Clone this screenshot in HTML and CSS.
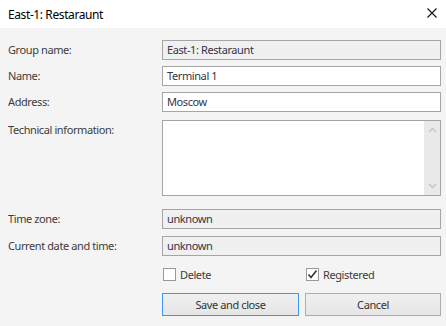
FILE: index.html
```html
<!DOCTYPE html>
<html lang="en">
<head>
    <meta charset="UTF-8">
    <title>East-1: Restaraunt</title>
    <link rel="stylesheet" href="styles.css">
</head>
<body>
    <div class="titlebar">
        <span class="title">East-1: Restaraunt</span>
        <span class="close">
            <svg width="10" height="10" viewBox="0 0 10 10">
                <path d="M0.5 0.5 L9.5 9.5 M9.5 0.5 L0.5 9.5" stroke="#111" stroke-width="1.1" fill="none"/>
            </svg>
        </span>
    </div>

    <div class="form">
        <div class="row">
            <label class="label">Group name:</label>
            <div class="field readonly">East-1: Restaraunt</div>
        </div>
        <div class="row">
            <label class="label">Name:</label>
            <div class="field">Terminal 1</div>
        </div>
        <div class="row">
            <label class="label">Address:</label>
            <div class="field">Moscow</div>
        </div>
        <div class="row row-memo">
            <label class="label">Technical information:</label>
            <div class="memo">
                <div class="memo-text"></div>
                <div class="scrollbar">
                    <svg width="9" height="6" viewBox="0 0 9 6">
                        <path d="M1 5 L4.5 1.5 L8 5" stroke="#c4c4c4" stroke-width="1.4" fill="none"/>
                    </svg>
                    <svg width="9" height="6" viewBox="0 0 9 6">
                        <path d="M1 1 L4.5 4.5 L8 1" stroke="#c4c4c4" stroke-width="1.4" fill="none"/>
                    </svg>
                </div>
            </div>
        </div>
        <div class="row row-time">
            <label class="label">Time zone:</label>
            <div class="field readonly">unknown</div>
        </div>
        <div class="row row-date">
            <label class="label">Current date and time:</label>
            <div class="field readonly">unknown</div>
        </div>

        <div class="pair checks">
            <div class="check">
                <span class="box"></span>
                <span>Delete</span>
            </div>
            <div class="check">
                <span class="box">
                    <svg width="11" height="11" viewBox="0 0 11 11">
                        <path d="M1.5 5.5 L4 8.5 L9.5 1.5" stroke="#333" stroke-width="1.6" fill="none"/>
                    </svg>
                </span>
                <span>Registered</span>
            </div>
        </div>

        <div class="pair buttons">
            <button class="btn btn-default">Save and close</button>
            <button class="btn">Cancel</button>
        </div>
    </div>
</body>
</html>
```

FILE: styles.css
```css
body {
    margin: 0;
    background: #f4f4f4;
    font-family: 'Noto Sans', sans-serif;
    font-size: 11px;
    letter-spacing: -0.4px;
    color: #3c3c3c;
}

.titlebar {
    height: 28px;
    background: #fff;
    display: flex;
    align-items: center;
    justify-content: space-between;
    padding: 0 9px 0 8px;
}

.title {
    font-size: 12px;
    color: #000;
}

.close {
    display: flex;
    margin-top: -2px;
}

.form {
    padding: 12px 5px 0 8px;
}

/* label + control rows */
.row {
    display: flex;
    margin-top: 6px;
}

.row:first-child {
    margin-top: 0;
}

.label {
    width: 154px;
    line-height: 20px;
}

.field {
    flex: 1;
    box-sizing: border-box;
    height: 20px;
    line-height: 18px;
    padding: 0 4px;
    border: 1px solid #a5a5a5;
    background: #fff;
    color: #33334a;
}

.field.readonly {
    background: #f0f0f0;
}

.row-memo {
    margin-top: 8px;
}

.memo {
    flex: 1;
    box-sizing: border-box;
    height: 76px;
    border: 1px solid #a5a5a5;
    background: #fff;
    display: flex;
}

.memo-text {
    flex: 1;
}

.scrollbar {
    width: 16px;
    background: #e9e9e9;
    display: flex;
    flex-direction: column;
    justify-content: space-between;
    align-items: center;
    padding: 6px 0 6px;
}

.row-time {
    margin-top: 13px;
}

.row-date {
    margin-top: 7px;
}

/* two-column area under the fields */
.pair {
    margin-left: 154px;
    display: grid;
    grid-template-columns: 137px 136px;
    column-gap: 6px;
}

.checks {
    margin-top: 12px;
    height: 13px;
}

.check {
    display: flex;
    align-items: center;
    gap: 4px;
    padding-left: 1px;
    line-height: 13px;
}

.box {
    box-sizing: border-box;
    width: 13px;
    height: 13px;
    border: 1px solid #999;
    background: #fff;
    display: flex;
    align-items: center;
    justify-content: center;
}

.buttons {
    margin-top: 12px;
}

.btn {
    box-sizing: border-box;
    height: 23px;
    font-family: 'Noto Sans', sans-serif;
    font-size: 11px;
    letter-spacing: -0.4px;
    color: #333;
    border: 1px solid #adadad;
    background: linear-gradient(#f0f0f0, #e5e5e5);
    padding: 0;
}

.btn-default {
    border-color: #3b97f0;
}
```
